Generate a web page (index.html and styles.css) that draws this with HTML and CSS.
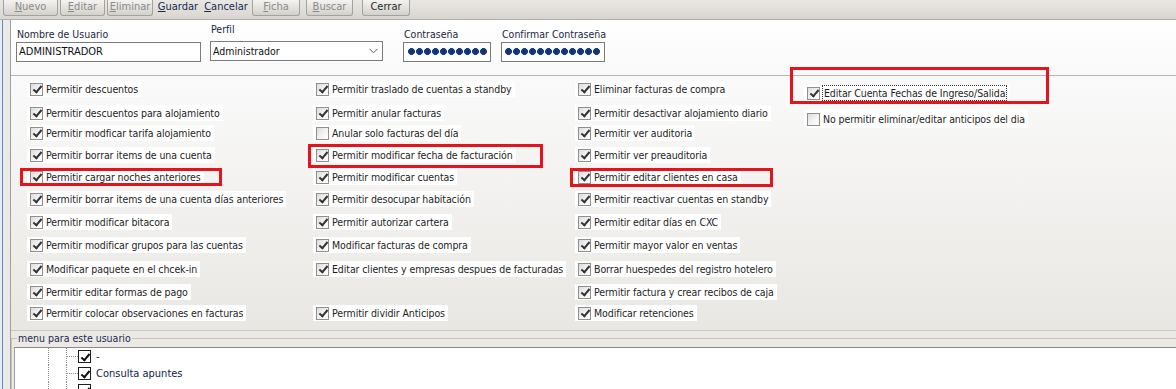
FILE: index.html
```html
<!DOCTYPE html>
<html lang="es">
<head>
<meta charset="utf-8">
<title>Usuario</title>
<link rel="stylesheet" href="styles.css">
</head>
<body>
<div class="toolbar">
  <div class="tb b-nuevo"><u>N</u>uevo</div>
  <div class="tb b-editar"><u>E</u>ditar</div>
  <div class="tb b-eliminar"><u>E</u>liminar</div>
  <div class="tb flat b-guardar"><u>G</u>uardar</div>
  <div class="tb flat b-cancelar"><u>C</u>ancelar</div>
  <div class="tb b-ficha"><u>F</u>icha</div>
  <div class="tb b-buscar"><u>B</u>uscar</div>
  <div class="tb active b-cerrar">Cerrar</div>
</div>
<div class="layout">
  <div class="gutter"></div>
  <div class="main">
    <div class="form">
      <div class="field f-user">
        <label>Nombre de Usuario</label>
        <div class="input">ADMINISTRADOR</div>
      </div>
      <div class="field f-perfil">
        <label>Perfil</label>
        <div class="input select"><span>Administrador</span><svg width="9" height="6" viewBox="0 0 9 6"><polyline points="0.5,0.8 4.5,4.8 8.5,0.8" fill="none" stroke="#5a5a5a" stroke-width="1"/></svg></div>
      </div>
      <div class="field f-pass">
        <label>Contraseña</label>
        <div class="input"><div class="dots d10"></div></div>
      </div>
      <div class="field f-conf">
        <label>Confirmar Contraseña</label>
        <div class="input"><div class="dots d12"></div></div>
      </div>
    </div>
    <div class="perms">
      <div class="perm"><span class="cb on"></span>Permitir descuentos</div>
      <div class="perm"><span class="cb on"></span>Permitir descuentos para alojamiento</div>
      <div class="perm"><span class="cb on"></span>Permitir modficar tarifa alojamiento</div>
      <div class="perm"><span class="cb on"></span>Permitir borrar items de una cuenta</div>
      <div class="perm"><span class="cb on"></span>Permitir cargar noches anteriores</div>
      <div class="perm"><span class="cb on"></span>Permitir borrar items de una cuenta días anteriores</div>
      <div class="perm"><span class="cb on"></span>Permitir modificar bitacora</div>
      <div class="perm"><span class="cb on"></span>Permitir modificar grupos para las cuentas</div>
      <div class="perm"><span class="cb on"></span>Modificar paquete en el chcek-in</div>
      <div class="perm"><span class="cb on"></span>Permitir editar formas de pago</div>
      <div class="perm"><span class="cb on"></span>Permitir colocar observaciones en facturas</div>

      <div class="perm"><span class="cb on"></span>Permitir traslado de cuentas a standby</div>
      <div class="perm"><span class="cb on"></span>Permitir anular facturas</div>
      <div class="perm"><span class="cb"></span>Anular solo facturas del día</div>
      <div class="perm"><span class="cb on"></span>Permitir modificar fecha de facturación</div>
      <div class="perm"><span class="cb on"></span>Permitir modificar cuentas</div>
      <div class="perm"><span class="cb on"></span>Permitir desocupar habitación</div>
      <div class="perm"><span class="cb on"></span>Permitir autorizar cartera</div>
      <div class="perm"><span class="cb on"></span>Modificar facturas de compra</div>
      <div class="perm"><span class="cb on"></span>Editar clientes y empresas despues de facturadas</div>
      <div class="blank"></div>
      <div class="perm"><span class="cb on"></span>Permitir dividir Anticipos</div>

      <div class="perm"><span class="cb on"></span>Eliminar facturas de compra</div>
      <div class="perm"><span class="cb on"></span>Permitir desactivar alojamiento diario</div>
      <div class="perm"><span class="cb on"></span>Permitir ver auditoria</div>
      <div class="perm"><span class="cb on"></span>Permitir ver preauditoria</div>
      <div class="perm"><span class="cb on"></span>Permitir editar clientes en casa</div>
      <div class="perm"><span class="cb on"></span>Permitir reactivar cuentas en standby</div>
      <div class="perm"><span class="cb on"></span>Permitir editar días en CXC</div>
      <div class="perm"><span class="cb on"></span>Permitir mayor valor en ventas</div>
      <div class="perm"><span class="cb on"></span>Borrar huespedes del registro hotelero</div>
      <div class="perm"><span class="cb on"></span>Permitir factura y crear recibos de caja</div>
      <div class="perm"><span class="cb on"></span>Modificar retenciones</div>

      <div class="col4">
        <div class="perm plain"><span class="cb on"></span><span class="focus">Editar Cuenta Fechas de Ingreso/Salida</span></div>
        <div class="perm tall"><span class="cb"></span>No permitir eliminar/editar anticipos del dia</div>
      </div>
    </div>
    <div class="bottom">
      <div class="group">
        <div class="group-title">menu para este usuario</div>
        <div class="tree">
          <div class="row"><span class="indent"></span><span class="vl"></span><span class="br"></span><span class="tcb"></span><span class="tlabel">-</span></div>
          <div class="row"><span class="indent"></span><span class="vl"></span><span class="br"></span><span class="tcb"></span><span class="tlabel">Consulta apuntes</span></div>
          <div class="row"><span class="indent"></span><span class="vl"></span><span class="br"></span><span class="tcb"></span><span class="tlabel"></span></div>
        </div>
      </div>
    </div>
  </div>
</div>
<div class="mark m1"></div>
<div class="mark m2"></div>
<div class="mark m3"></div>
<div class="mark m4"></div>
</body>
</html>
```

FILE: styles.css
```css
* { box-sizing: border-box; }
html, body { margin: 0; padding: 0; }
body {
  width: 1176px;
  height: 389px;
  overflow: hidden;
  position: relative;
  font-family: "DejaVu Sans Condensed", "Liberation Sans", Arial, sans-serif;
  font-size: 10.5px;
  color: #1f1f1f;
  background: #ffffff;
}

/* toolbar */
.toolbar {
  height: 20px;
  border-bottom: 1px solid #b0aeaa;
  background: linear-gradient(#e9e7e3, #d9d6d1);
  display: flex;
  align-items: flex-start;
  padding-left: 3px;
}
.tb {
  height: 16px;
  line-height: 14px;
  text-align: center;
  color: #8a8a8a;
  border: 1px solid #a4a29e;
  border-top: none;
  border-radius: 0 0 3px 3px;
  background: linear-gradient(#f4f3f1, #d4d1cc);
  margin-left: 2px;
  white-space: nowrap;
  font-size: 11px;
}
.tb.flat { border-color: transparent; background: none; color: #1b2853; }
.tb.active { color: #2a2a2a; }
.b-nuevo { width: 55px; margin-left: 0; }
.b-editar { width: 45px; }
.b-eliminar { width: 46px; }
.b-guardar { width: 46px; }
.b-cancelar { width: 48px; margin-left: 1px; }
.b-ficha { width: 48px; }
.b-buscar { width: 47px; margin-left: 6px; }
.b-cerrar { width: 48px; margin-left: 9px; }

/* layout */
.layout { display: flex; height: 369px; }
.gutter {
  width: 10px;
  background: linear-gradient(to right, #e8ecf0 0 2px, #5b8ec2 2px 3px, #eceae6 3px);
}
.main {
  flex: 1;
  border-left: 1px solid #9e9e9e;
  display: flex;
  flex-direction: column;
}

/* form */
.form {
  height: 55px;
  flex: none;
  background: linear-gradient(#ffffff, #f9f9f9);
  display: flex;
  align-items: flex-start;
  padding: 7px 0 0 5px;
}
.field { display: flex; flex-direction: column; }
.field label {
  line-height: 14px;
  padding-left: 1px;
  margin-bottom: 1px;
  color: #1c2742;
  white-space: nowrap;
}
.f-user { width: 185px; }
.f-perfil { width: 173px; margin-left: 9px; }
.f-perfil label { margin-top: -5px; margin-bottom: 5px; padding-left: 1px; }
.f-pass { width: 88px; margin-left: 20px; }
.f-conf { width: 104px; margin-left: 10px; }
.input {
  height: 20px;
  border: 1px solid #7c7c7c;
  background: #ffffff;
  padding-left: 2px;
  line-height: 18px;
  font-size: 11px;
  color: #111111;
}
.select {
  display: flex;
  justify-content: space-between;
  align-items: center;
  padding-right: 4px;
  font-size: 10.5px;
}
.dots {
  height: 7px;
  margin: 5px 0 0 2px;
  background: radial-gradient(circle at 3.5px 3.5px, #12357a 3.1px, transparent 3.7px) 0 0 / 8px 7px repeat-x;
}
.d10 { width: 80px; }
.d12 { width: 96px; margin-left: 1px; }

/* permissions */
.perms {
  height: 256px;
  flex: none;
  border-top: 1px solid #b6b6ba;
  border-bottom: 1px solid #c8c8c8;
  background: linear-gradient(#fafafa, #e9e7e3);
  display: grid;
  grid-template-columns: 286px 262px 229px 1fr;
  grid-template-rows: 24px 20px 22px 22px 22px 23px 23px 24px 23px 21px 18px;
  grid-auto-flow: column;
  padding: 5px 0 0 16px;
}
.perm {
  justify-self: start;
  align-self: start;
  display: inline-flex;
  align-items: center;
  gap: 3px;
  height: 16px;
  padding: 0 3px;
  background: #ffffff;
  white-space: nowrap;
  letter-spacing: -0.1px;
  color: #1e1e1e;
}
.perm.tall { height: 18px; }
.col4 {
  grid-column: 4;
  grid-row: 1 / -1;
  display: flex;
  flex-direction: column;
  align-items: flex-start;
  gap: 9px;
  padding-top: 4px;
}
.focus {
  outline: 1px dotted #333333;
  outline-offset: -1px;
  padding: 0 2px;
  line-height: 16px;
  margin-left: -1px;
}
.cb {
  width: 13px;
  height: 13px;
  flex: none;
  border: 1px solid #8e8f8f;
  background: linear-gradient(135deg, #dcdcdc, #f4f4f4 55%, #ffffff);
  position: relative;
}
.cb.on::after {
  content: "";
  position: absolute;
  left: 3.5px;
  top: 0.5px;
  width: 3px;
  height: 7px;
  border: solid #333333;
  border-width: 0 2px 2px 0;
  transform: rotate(40deg);
}

/* bottom group + tree */
.bottom {
  flex: 1;
  background: #ece9e5;
  padding-top: 7px;
  display: flex;
  flex-direction: column;
}
.group {
  flex: 1;
  border-top: 1px solid #c4c4c4;
  border-left: 1px solid #c4c4c4;
  display: flex;
  flex-direction: column;
}
.group-title {
  align-self: flex-start;
  margin: -7px 0 0 5px;
  padding: 0 1px;
  line-height: 13px;
  background: #ece9e5;
  color: #1b2a52;
}
.tree {
  flex: 1;
  margin: 2px 0 0 2px;
  border-top: 1px solid #8a8a8a;
  border-left: 1px solid #a0a0a0;
  background: #ffffff;
  overflow: hidden;
}
.row { display: flex; height: 17px; }
.indent { width: 33px; flex: none; }
.vl { width: 18px; flex: none; border-left: 1px dotted #8c8c8c; }
.br {
  width: 12px;
  flex: none;
  border-left: 1px dotted #8c8c8c;
  display: flex;
  align-items: center;
}
.br::after { content: ""; flex: 1; border-top: 1px dotted #8c8c8c; }
.tcb {
  align-self: center;
  width: 13px;
  height: 13px;
  flex: none;
  border: 1px solid #1e1e1e;
  background: #ffffff;
  position: relative;
}
.tcb::after {
  content: "";
  position: absolute;
  left: 3.5px;
  top: 0.5px;
  width: 3px;
  height: 7px;
  border: solid #111111;
  border-width: 0 2.5px 2.5px 0;
  transform: rotate(40deg);
}
.tlabel {
  margin-left: 5px;
  line-height: 17px;
  color: #14234e;
  font-size: 11px;
}

/* red annotation boxes */
.mark {
  position: absolute;
  border: 3px solid #e3141c;
}
.m1 { left: 20px; top: 168px; width: 202px; height: 18px; }
.m2 { left: 308px; top: 144px; width: 235px; height: 24px; }
.m3 { left: 570px; top: 168px; width: 203px; height: 19px; }
.m4 { left: 790px; top: 67px; width: 259px; height: 37px; }
```
